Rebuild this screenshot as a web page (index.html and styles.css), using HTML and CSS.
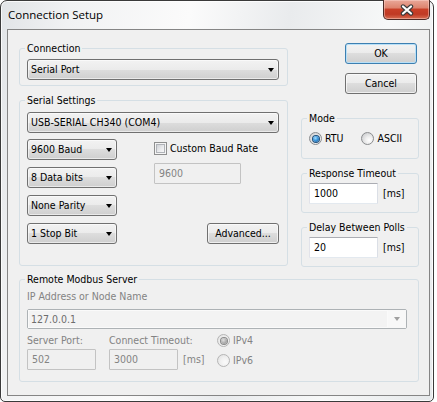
FILE: index.html
```html
<!DOCTYPE html>
<html>
<head>
<meta charset="utf-8">
<title>Connection Setup</title>
<link rel="stylesheet" href="styles.css">
</head>
<body>
<div class="window">
  <div class="titlebar">
    <span class="title">Connection Setup</span>
    <div class="close">
      <svg width="14" height="12" viewBox="0 0 14 12">
        <path d="M3 2.5 L11 9.5 M11 2.5 L3 9.5" stroke="#3c3c3c" stroke-width="4.4" stroke-linecap="round" fill="none"/>
        <path d="M3 2.5 L11 9.5 M11 2.5 L3 9.5" stroke="#ffffff" stroke-width="2.2" stroke-linecap="round" fill="none"/>
      </svg>
    </div>
  </div>
  <div class="client">
    <div class="toprow">
      <div class="leftcol">
        <fieldset class="grp g-conn">
          <legend>Connection</legend>
          <div class="combo c-wide"><span class="ctext">Serial Port</span><i class="arrow"></i></div>
        </fieldset>
        <fieldset class="grp g-serial">
          <legend>Serial Settings</legend>
          <div class="combo c-wide"><span class="ctext">USB-SERIAL CH340 (COM4)</span><i class="arrow"></i></div>
          <div class="serial-body">
            <div class="small-combos">
              <div class="combo c-small"><span class="ctext">9600 Baud</span><i class="arrow"></i></div>
              <div class="combo c-small"><span class="ctext">8 Data bits</span><i class="arrow"></i></div>
              <div class="combo c-small"><span class="ctext">None Parity</span><i class="arrow"></i></div>
              <div class="combo c-small"><span class="ctext">1 Stop Bit</span><i class="arrow"></i></div>
            </div>
            <div class="baud-col">
              <div class="check-row"><span class="checkbox"><span class="check-inner"></span></span><span>Custom Baud Rate</span></div>
              <div class="edit disabled e-baud">9600</div>
              <div class="btn b-adv">Advanced...</div>
            </div>
          </div>
        </fieldset>
      </div>
      <div class="rightcol">
        <div class="btn b-dlg b-default">OK</div>
        <div class="btn b-dlg b-cancel">Cancel</div>
        <fieldset class="grp g-mode">
          <legend>Mode</legend>
          <div class="radios">
            <span class="radio-item"><span class="radio checked"></span><span>RTU</span></span>
            <span class="radio-item r-ascii"><span class="radio"></span><span>ASCII</span></span>
          </div>
        </fieldset>
        <fieldset class="grp g-time">
          <legend>Response Timeout</legend>
          <div class="edit-row"><div class="edit e-ms">1000</div><span class="unit">[ms]</span></div>
        </fieldset>
        <fieldset class="grp g-delay">
          <legend>Delay Between Polls</legend>
          <div class="edit-row"><div class="edit e-ms">20</div><span class="unit">[ms]</span></div>
        </fieldset>
      </div>
    </div>
    <fieldset class="grp g-remote">
      <legend>Remote Modbus Server</legend>
      <div class="dis-text ip-label">IP Address or Node Name</div>
      <div class="dcombo"><span class="dtext">127.0.0.1</span><span class="dbtn"><i class="arrow dis-arrow"></i></span></div>
      <div class="remote-row">
        <div class="rcol rcol-port">
          <div class="dis-text rlabel">Server Port:</div>
          <div class="edit disabled e-port">502</div>
        </div>
        <div class="rcol rcol-timeout">
          <div class="dis-text rlabel">Connect Timeout:</div>
          <div class="edit-row"><div class="edit disabled e-port">3000</div><span class="unit dis-text">[ms]</span></div>
        </div>
        <div class="ipcol">
          <span class="radio-item"><span class="radio disabled checked"></span><span class="dis-text">IPv4</span></span>
          <span class="radio-item"><span class="radio disabled"></span><span class="dis-text">IPv6</span></span>
        </div>
      </div>
    </fieldset>
  </div>
</div>
</body>
</html>
```
FILE: styles.css
```css
* { box-sizing: border-box; }
html, body { margin: 0; padding: 0; background: #ffffff; }
body {
  font-family: "DejaVu Sans Condensed", "DejaVu Sans", sans-serif;
  font-size: 10.5px;
  color: #000;
}

.window {
  width: 434px;
  height: 402px;
  border: 1px solid #3a3a3a;
  border-radius: 7px 7px 5px 5px;
  background: linear-gradient(100deg, #e1e4e7 0%, #f1f2f3 14%, #fbfbfb 38%, #e9ebed 58%, #f7f8f8 78%, #e6e9eb 100%);
  box-shadow: inset 0 0 0 1px rgba(255,255,255,0.8);
  padding: 0 3px 5px 6px;
  display: flex;
  flex-direction: column;
}

.titlebar {
  height: 28px;
  display: flex;
  align-items: flex-start;
  flex: none;
}
.title {
  font-family: "Open Sans", "Noto Sans", sans-serif;
  font-size: 11.5px;
  line-height: 15px;
  margin-top: 6px;
  margin-left: 1px;
  color: #000;
}
.close {
  margin-left: auto;
  margin-top: -1px;
  width: 47px;
  height: 20px;
  border: 1px solid #4b2a26;
  border-top: none;
  border-radius: 0 0 5px 5px;
  background: linear-gradient(#e9a899 0%, #de8570 40%, #c83f27 50%, #c03a24 75%, #d86e53 100%);
  box-shadow: inset 0 0 0 1px rgba(255,220,210,0.45);
  display: flex;
  align-items: center;
  justify-content: center;
}
.close svg { display: block; margin-left: 1px; }

.client {
  flex: 1;
  border: 1px solid #858585;
  background: #f0f0f0;
  padding: 0 10px 0 11px;
  display: flex;
  flex-direction: column;
}

.toprow {
  display: flex;
  gap: 13px;
  height: 237px;
  flex: none;
}
.leftcol {
  width: 269px;
  padding-top: 12px;
  display: flex;
  flex-direction: column;
}
.rightcol {
  width: 118px;
  padding-top: 13px;
  display: flex;
  flex-direction: column;
}

/* group boxes */
.grp {
  margin: 0;
  min-width: 0;
  border: 1px solid #d5dfe5;
  border-radius: 3px;
}
.grp legend {
  padding: 0 2px;
  margin-left: -2px;
  line-height: 13px;
  height: 13px;
}
.g-conn { padding: 4px 8px 5px 7px; }
.g-serial { margin-top: 8px; padding: 5px 8px 21px 7px; }
.g-mode { margin-top: 18px; padding: 7px 6px 13px 7px; }
.g-time { margin-top: 8px; padding: 3px 6px 8px 7px; }
.g-delay { margin-top: 8px; padding: 3px 6px 8px 7px; }
.g-remote { margin-top: 6px; padding: 4px 11px 11px 7px; }

/* combos */
.combo {
  height: 21px;
  border: 1px solid #707070;
  border-radius: 3px;
  background: linear-gradient(#f2f2f2 0%, #ebebeb 50%, #dddddd 50%, #cfcfcf 100%);
  box-shadow: inset 0 0 0 1px rgba(255,255,255,0.55);
  display: flex;
  align-items: center;
  padding: 0 4px 0 3px;
}
.ctext { flex: 1; line-height: 13px; white-space: nowrap; }
.arrow {
  display: block;
  width: 0;
  height: 0;
  border-left: 3.5px solid transparent;
  border-right: 3.5px solid transparent;
  border-top: 4px solid #000;
  margin-top: 1px;
}
.c-wide { width: 252px; }
.c-small { width: 90px; }

.serial-body {
  display: flex;
  margin-top: 6px;
}
.small-combos {
  display: flex;
  flex-direction: column;
  gap: 7px;
}
.baud-col {
  margin-left: 37px;
  width: 125px;
  display: flex;
  flex-direction: column;
}
.check-row {
  height: 21px;
  display: flex;
  align-items: flex-start;
  padding-top: 3px;
  line-height: 13px;
  white-space: nowrap;
}
.checkbox {
  width: 13px;
  height: 13px;
  border: 1px solid #8e8f8f;
  background: #f4f4f4;
  padding: 1px;
  margin-right: 3px;
  flex: none;
}
.check-inner {
  display: block;
  width: 9px;
  height: 9px;
  border: 1px solid #b0b3b8;
  background: linear-gradient(135deg, #cfd2d6 0%, #e9eaec 55%, #f7f7f7 100%);
}

/* edits */
.edit {
  height: 21px;
  border: 1px solid;
  border-color: #abadb3 #dbdfe6 #e3e9ef #e2e3ea;
  background: #fff;
  padding-left: 4px;
  line-height: 19px;
  border-radius: 1px;
}
.edit.disabled {
  background: #f0f0f0;
  border-color: #c3c3c3;
  color: #838383;
}
.e-baud { width: 87px; margin-top: 3px; }
.e-ms { width: 69px; }
.e-port { width: 69px; }
.edit-row { display: flex; align-items: center; }
.unit { margin-left: 5px; line-height: 13px; }

/* buttons */
.btn {
  height: 21px;
  border: 1px solid #707070;
  border-radius: 3px;
  background: linear-gradient(#f2f2f2 0%, #ebebeb 50%, #dddddd 50%, #cfcfcf 100%);
  box-shadow: inset 0 0 0 1px rgba(252,252,252,0.7);
  display: flex;
  align-items: center;
  justify-content: center;
  line-height: 13px;
}
.b-adv { width: 72px; margin-top: auto; margin-left: auto; }
.b-dlg { width: 72px; align-self: flex-end; margin-right: 2px; }
.b-default {
  border-color: #3c7fb1;
  box-shadow: inset 0 0 0 1px #b9e0f7;
}
.b-cancel { margin-top: 9px; }

/* radios */
.radios { display: flex; height: 13px; }
.radio-item {
  display: flex;
  align-items: center;
  height: 13px;
  line-height: 13px;
  white-space: nowrap;
}
.r-ascii { margin-left: 18px; }
.radio {
  width: 13px;
  height: 13px;
  border-radius: 50%;
  border: 1px solid #8a8c8e;
  background: radial-gradient(circle at 65% 65%, #ffffff 0%, #eeeeee 35%, #cfd0d2 80%, #bdbec0 100%);
  margin-right: 3px;
  flex: none;
  display: flex;
  align-items: center;
  justify-content: center;
}
.radio.checked::after {
  content: "";
  width: 6px;
  height: 6px;
  border-radius: 50%;
  background: radial-gradient(circle at 40% 35%, #a8e0ff 0%, #3c97dc 45%, #124f8c 100%);
  box-shadow: 0 0 0 1px #1f4f7a;
}
.radio.disabled {
  border-color: #b5b5b5;
  background: radial-gradient(circle at 65% 65%, #fafafa 0%, #f0f0f0 45%, #dedede 100%);
}
.radio.disabled.checked::after {
  background: radial-gradient(circle at 40% 35%, #e0e0e0 0%, #a9a9a9 60%, #8c8c8c 100%);
  box-shadow: 0 0 0 1px #8a8a8a;
}

/* remote */
.dis-text { color: #838383; }
.ip-label { line-height: 13px; height: 13px; }
.dcombo {
  margin-top: 6px;
  width: 380px;
  height: 20px;
  border: 1px solid #adb2b5;
  border-radius: 2px;
  background: #f0f0f0;
  display: flex;
  align-items: stretch;
}
.dtext {
  flex: 1;
  line-height: 18px;
  padding-left: 3px;
  color: #6d6d6d;
  background: #f3f3f3;
  box-shadow: inset 0 0 0 1px #fafafa;
}
.dbtn {
  width: 18px;
  display: flex;
  align-items: center;
  justify-content: center;
  background: #f8f8f8;
}
.dis-arrow { border-top-color: #a0a0a0; margin-top: 0; }

.remote-row {
  display: flex;
  margin-top: 5px;
}
.rcol { display: flex; flex-direction: column; }
.rcol-port { width: 82px; }
.rcol-timeout { width: 108px; }
.rlabel { line-height: 13px; height: 13px; margin-bottom: 2px; }
.ipcol {
  display: flex;
  flex-direction: column;
  gap: 7px;
}
.ipcol .radio-item .radio { margin-right: 3px; }
```
